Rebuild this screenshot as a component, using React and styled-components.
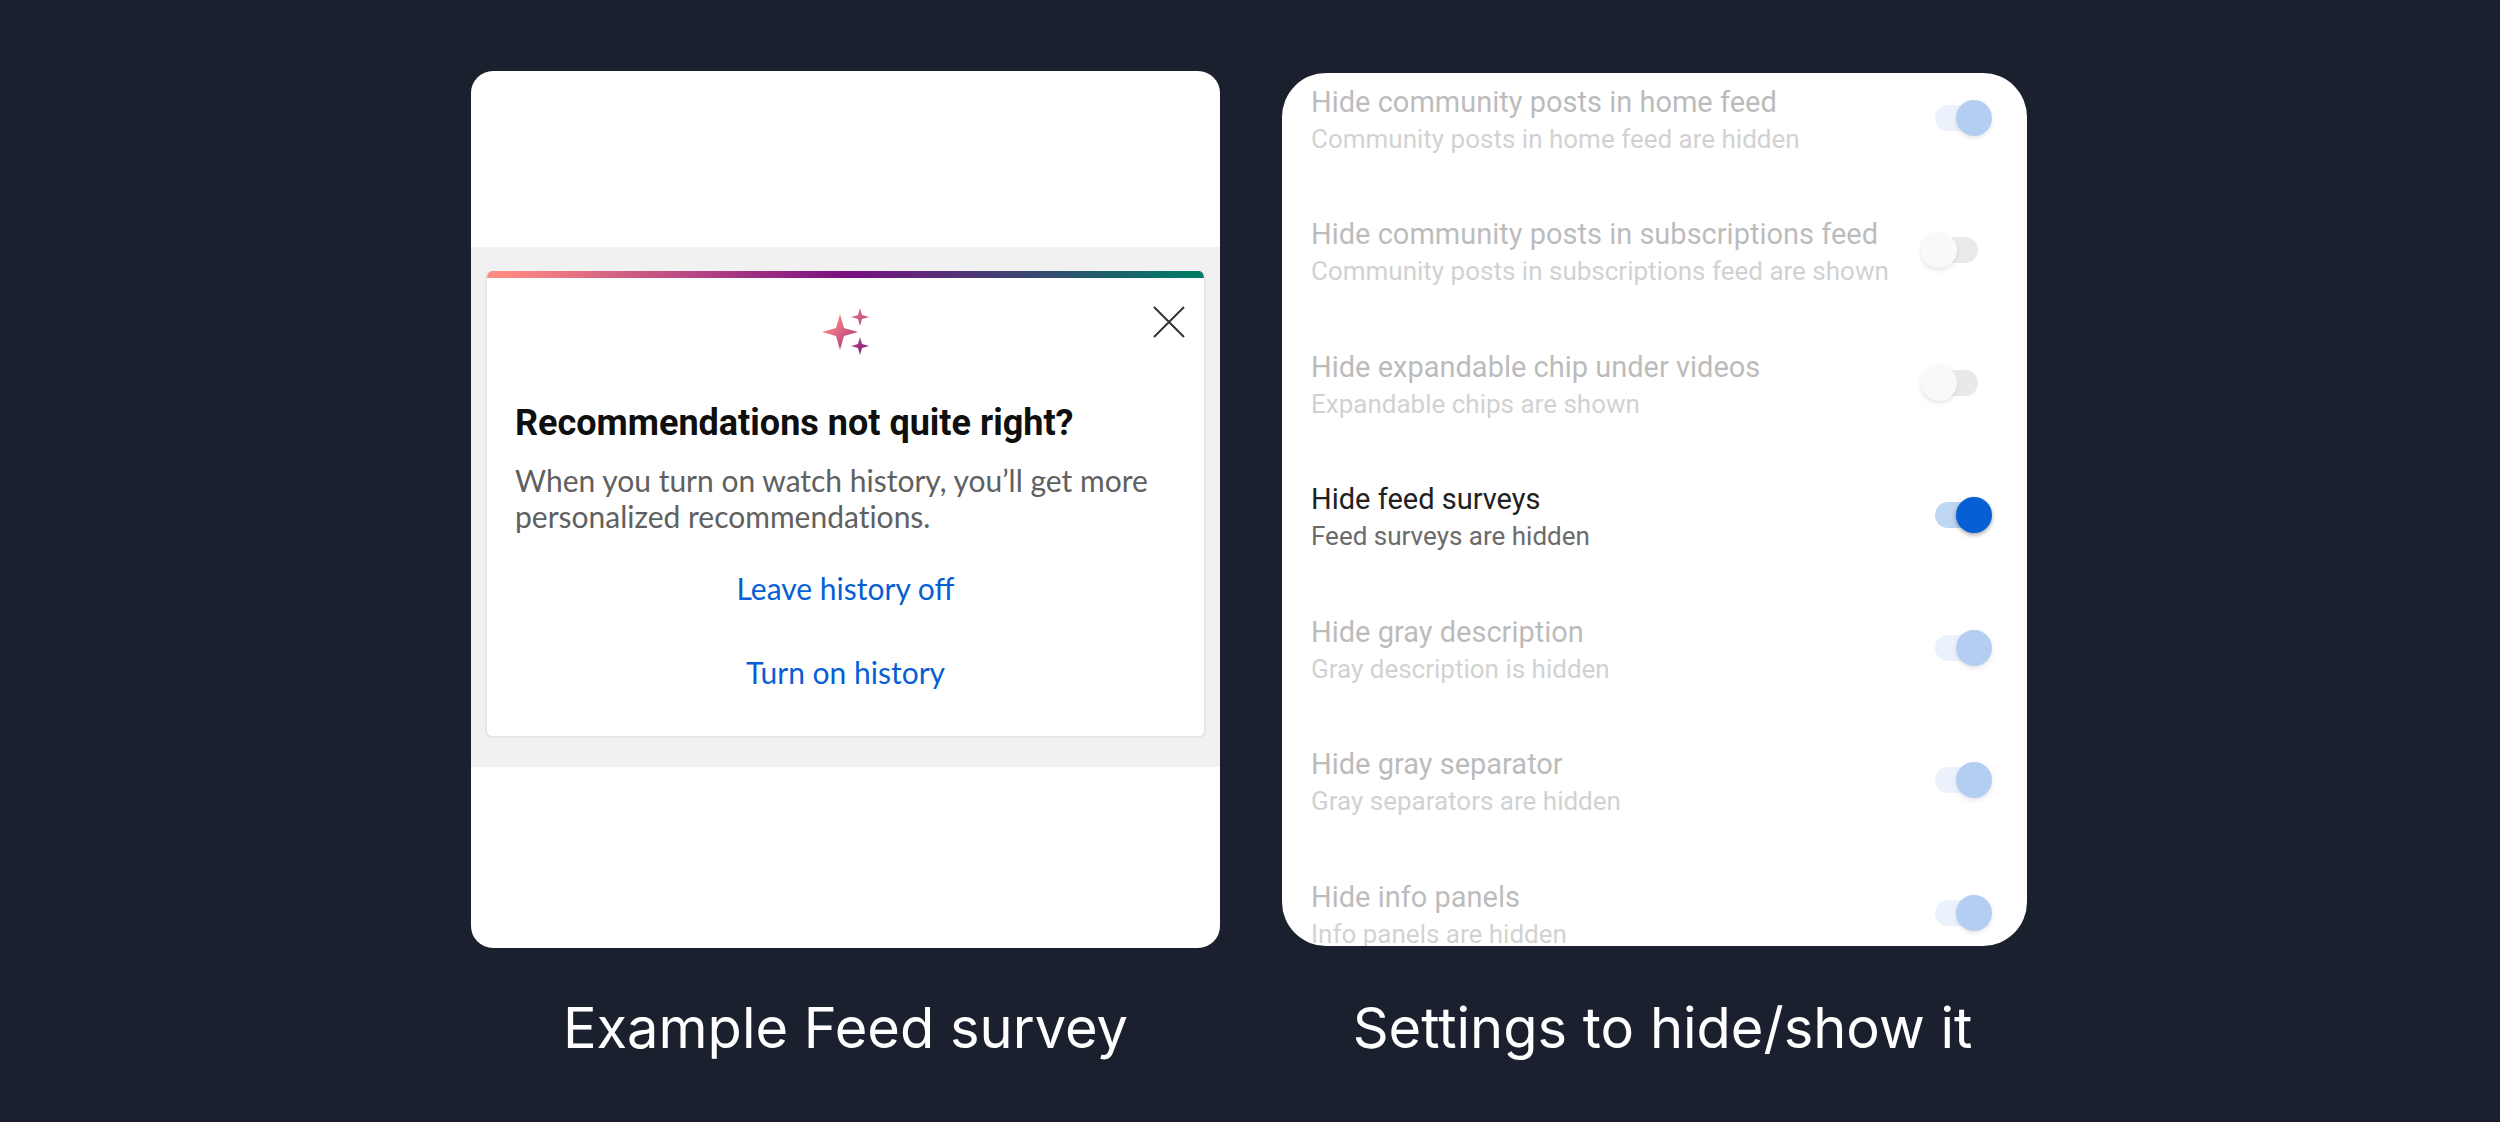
import React from "react";
import styled, { createGlobalStyle } from "styled-components";

const GlobalStyle = createGlobalStyle`
  *, *::before, *::after { box-sizing: border-box; }
  body {
    margin: 0;
    background: #1b202e;
    font-family: Roboto, "Liberation Sans", sans-serif;
  }
  button, input { font: inherit; margin: 0; }
`;

const Page = styled.main`
  display: flex;
  justify-content: center;
  align-items: stretch;
  gap: 62px;
  min-height: 100vh;
  padding: 71px 34px 0 32px;
  border-bottom: 1px solid #171a26;
`;

const Column = styled.figure`
  display: flex;
  flex-direction: column;
  flex: 0 1 ${(p) => p.$basis}px;
  min-width: 0;
  margin: ${(p) => p.$top}px 0 0;
`;

const Caption = styled.figcaption`
  margin-top: ${(p) => p.$space}px;
  padding-left: ${(p) => p.$indent || 0}px;
  color: #fff;
  font-family: Inter, "Liberation Sans", sans-serif;
  font-size: 56px;
  line-height: 72px;
  text-align: center;
  white-space: nowrap;
`;

const Phone = styled.div`
  padding: 176px 0 181px;
  background: #fff;
  border-radius: 22px;
`;

const Band = styled.div`
  padding: 24px 14px 29px;
  background: #f1f1f1;
`;

const Card = styled.section`
  display: grid;
  grid-template-columns: 1fr auto 1fr;
  overflow: hidden;
  padding-bottom: 40px;
  background: #fff;
  border: solid #e6e6e6;
  border-width: 0 2px 2px;
  border-radius: 7px;
`;

const Stripe = styled.div`
  grid-column: 1 / -1;
  height: 7px;
  margin: 0 -2px;
  background: linear-gradient(90deg, #ff8983 3%, #7b0f80 50%, #007a64 98%);
`;

const SparkleIcon = styled.svg`
  grid-column: 2;
  width: 48px;
  height: 48px;
  margin-top: 30px;
`;

const CloseButton = styled.button`
  display: grid;
  place-items: center;
  justify-self: end;
  width: 48px;
  height: 48px;
  margin: 20px 11px 0 0;
  padding: 0;
  border: 0;
  background: none;
  color: #333;
  cursor: pointer;
`;

const CardText = styled.div`
  grid-column: 1 / -1;
  padding: 43px 28px 0;
`;

const Heading = styled.h2`
  margin: 0;
  color: #0f0f0f;
  font-size: 36px;
  font-weight: 700;
  line-height: 48px;
`;

const Message = styled.p`
  margin: 15px 0 0;
  color: #606060;
  font-family: Lato, "Liberation Sans", sans-serif;
  font-size: 30px;
  font-variant-ligatures: none;
  line-height: 36px;
`;

const Actions = styled.div`
  grid-column: 1 / -1;
  display: flex;
  flex-direction: column;
  align-items: center;
  gap: 36px;
  padding-top: 30px;
`;

const Action = styled.button`
  padding: 0 16px;
  border: 0;
  background: none;
  color: #065fd4;
  font-family: Lato, "Liberation Sans", sans-serif;
  font-size: 30px;
  line-height: 48px;
  cursor: pointer;
`;

const Settings = styled.div`
  overflow: hidden;
  height: 873px;
  background: #fff;
  border-radius: 44px;
`;

const List = styled.ul`
  display: grid;
  grid-auto-rows: 1fr;
  height: 927px;
  margin: 0;
  padding: 0 34px 0 29px;
  list-style: none;
`;

const Row = styled.li`
  display: flex;
  justify-content: space-between;
  align-items: flex-start;
  padding-top: 10px;
  opacity: ${(p) => (p.$dim ? 0.3 : 1)};
`;

const RowLabel = styled.label`
  display: flex;
  flex-direction: column;
  white-space: nowrap;
`;

const Title = styled.span`
  color: #212121;
  font-size: 29px;
  line-height: 38px;
`;

const Summary = styled.span`
  color: #6b6b6b;
  font-size: 26px;
  line-height: 36px;
`;

const Switch = styled.input`
  appearance: none;
  position: relative;
  flex: none;
  width: 73px;
  height: 36px;
  margin-top: 17px;
  padding: 5px 15px;
  cursor: pointer;

  &::before {
    content: "";
    display: block;
    height: 26px;
    border-radius: 13px;
    background: #b9b9b9;
  }
  &::after {
    content: "";
    position: absolute;
    top: 0;
    left: 1px;
    width: 36px;
    height: 36px;
    border-radius: 50%;
    background: #ececec;
    box-shadow: 0 2px 4px rgba(0, 0, 0, 0.35);
  }
  &:checked::before { background: #bed5f4; }
  &:checked::after { left: 36px; background: #065fd4; }
`;

const settings = [
  { id: "home", title: "Hide community posts in home feed", summary: "Community posts in home feed are hidden", on: true },
  { id: "subs", title: "Hide community posts in subscriptions feed", summary: "Community posts in subscriptions feed are shown", on: false },
  { id: "chip", title: "Hide expandable chip under videos", summary: "Expandable chips are shown", on: false },
  { id: "surveys", title: "Hide feed surveys", summary: "Feed surveys are hidden", on: true, active: true },
  { id: "description", title: "Hide gray description", summary: "Gray description is hidden", on: true },
  { id: "separator", title: "Hide gray separator", summary: "Gray separators are hidden", on: true },
  { id: "info", title: "Hide info panels", summary: "Info panels are hidden", on: true },
];

function Sparkles() {
  return (
    <SparkleIcon viewBox="0 0 48 48" aria-hidden="true">
      <defs>
        <linearGradient id="sparkle" gradientUnits="userSpaceOnUse" x1="2" y1="18" x2="40" y2="56">
          <stop offset="0" stopColor="#ff8983" />
          <stop offset="1" stopColor="#7b0f80" />
        </linearGradient>
      </defs>
      <g fill="url(#sparkle)">
        <path d="M18 6 L22 20 L36 24 L22 28 L18 42 L14 28 L0 24 L14 20 Z" />
        <path d="M38 0 L40 7 L47 9 L40 11 L38 18 L36 11 L29 9 L36 7 Z" />
        <path d="M38 29 L40 36 L47 38 L40 40 L38 47 L36 40 L29 38 L36 36 Z" />
      </g>
    </SparkleIcon>
  );
}

export default function App() {
  return (
    <>
      <GlobalStyle />
      <Page>
        <Column $basis={749} $top={0}>
          <Phone>
            <Band>
              <Card>
                <Stripe />
                <Sparkles />
                <CloseButton aria-label="Close">
                  <svg width="32" height="32" viewBox="0 0 32 32" fill="none" stroke="currentColor" strokeWidth="2" aria-hidden="true">
                    <path d="M1 1 L31 31 M31 1 L1 31" />
                  </svg>
                </CloseButton>
                <CardText>
                  <Heading>Recommendations not quite right?</Heading>
                  <Message>When you turn on watch history, you’ll get more personalized recommendations.</Message>
                </CardText>
                <Actions>
                  <Action>Leave history off</Action>
                  <Action>Turn on history</Action>
                </Actions>
              </Card>
            </Band>
          </Phone>
          <Caption $space={44}>Example Feed survey</Caption>
        </Column>
        <Column $basis={745} $top={2}>
          <Settings>
            <List>
              {settings.map((s) => (
                <Row key={s.id} $dim={!s.active}>
                  <RowLabel htmlFor={s.id}>
                    <Title>{s.title}</Title>
                    <Summary>{s.summary}</Summary>
                  </RowLabel>
                  <Switch id={s.id} type="checkbox" role="switch" defaultChecked={s.on} />
                </Row>
              ))}
            </List>
          </Settings>
          <Caption $space={46} $indent={16}>Settings to hide/show it</Caption>
        </Column>
      </Page>
    </>
  );
}
